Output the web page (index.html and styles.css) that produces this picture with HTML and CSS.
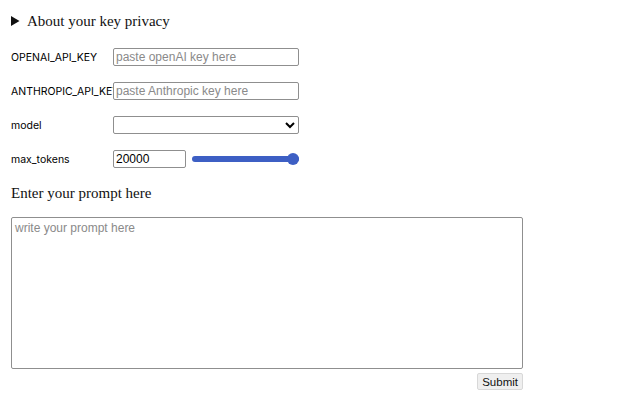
FILE: index.html
```html
<!DOCTYPE html>
<html>
<head>
<meta charset="utf-8">
<link rel="stylesheet" href="styles.css">
</head>
<body>
<div class="page">
  <details class="privacy">
    <summary>About your key privacy</summary>
  </details>
  <div class="rows">
    <div class="row">
      <label class="lbl">OPENAI_API_KEY</label>
      <input class="field" type="text" placeholder="paste openAI key here">
    </div>
    <div class="row">
      <label class="lbl">ANTHROPIC_API_KEY</label>
      <input class="field" type="text" placeholder="paste Anthropic key here">
    </div>
    <div class="row">
      <label class="lbl">model</label>
      <select class="field sel"><option></option></select>
    </div>
    <div class="row">
      <label class="lbl">max_tokens</label>
      <input class="num" type="text" value="20000">
      <input class="range" type="range" min="0" max="20000" value="20000">
    </div>
  </div>
  <h3 class="prompt-title">Enter your prompt here</h3>
  <textarea class="prompt" placeholder="write your prompt here"></textarea>
  <div class="actions">
    <button class="submit">Submit</button>
  </div>
</div>
</body>
</html>
```
FILE: styles.css
```css
html, body { margin: 0; padding: 0; background: #fff; }
.page {
  padding: 12px 11px 0 11px;
  width: 512px;
  font-family: "Liberation Sans", Arial, sans-serif;
  color: #111;
}
.privacy summary {
  font-family: "Liberation Serif", serif;
  font-size: 15px;
  line-height: 19px;
  cursor: pointer;
  height: 19px;
}
.rows {
  margin-top: 17px;
  display: flex;
  flex-direction: column;
  gap: 16px;
}
.row {
  display: flex;
  align-items: center;
  height: 18px;
}
.lbl {
  width: 102px;
  flex: none;
  font-family: Inter, "Liberation Sans", sans-serif;
  font-size: 10.5px;
  color: #000;
  white-space: nowrap;
  overflow: visible;
}
.field {
  position: relative;
  box-sizing: border-box;
  width: 186px;
  height: 18px;
  border: 1px solid #8f8f8f;
  border-radius: 2px;
  font-size: 12px;
  padding: 0 2px;
  font-family: "Liberation Sans", Arial, sans-serif;
  background: #fff;
}
.field::placeholder, .prompt::placeholder { color: #8a8a8a; }
.sel { padding: 0 2px; }
.num {
  position: relative;
  box-sizing: border-box;
  width: 73px;
  height: 18px;
  border: 1px solid #8f8f8f;
  border-radius: 2px;
  font-size: 12px;
  padding: 0 2px;
  font-family: "Liberation Sans", Arial, sans-serif;
}
.range {
  -webkit-appearance: none;
  appearance: none;
  margin: 0 0 0 6px;
  width: 107px;
  height: 12px;
  background: transparent;
}
.range::-webkit-slider-runnable-track {
  height: 6px;
  background: #3d5fc4;
  border-radius: 3px;
}
.range::-webkit-slider-thumb {
  -webkit-appearance: none;
  width: 12px;
  height: 12px;
  border-radius: 50%;
  background: #3d5fc4;
  margin-top: -3px;
}
.prompt-title {
  font-family: "Liberation Serif", serif;
  font-weight: normal;
  font-size: 15px;
  line-height: 19px;
  margin: 16px 0 0 0;
}
.prompt {
  display: block;
  box-sizing: border-box;
  margin-top: 14px;
  width: 512px;
  height: 152px;
  border: 1px solid #8f8f8f;
  border-radius: 2px;
  padding: 3px;
  font-size: 12px;
  font-family: "Liberation Sans", Arial, sans-serif;
  resize: none;
}
.actions {
  display: flex;
  justify-content: flex-end;
  margin-top: 4px;
}
.submit {
  box-sizing: border-box;
  height: 17px;
  padding: 0 4px;
  font-size: 11.5px;
  font-family: "Liberation Sans", Arial, sans-serif;
  background: #efefef;
  border: 1px solid #d8d8d8;
  border-radius: 2px;
  color: #111;
}
```
